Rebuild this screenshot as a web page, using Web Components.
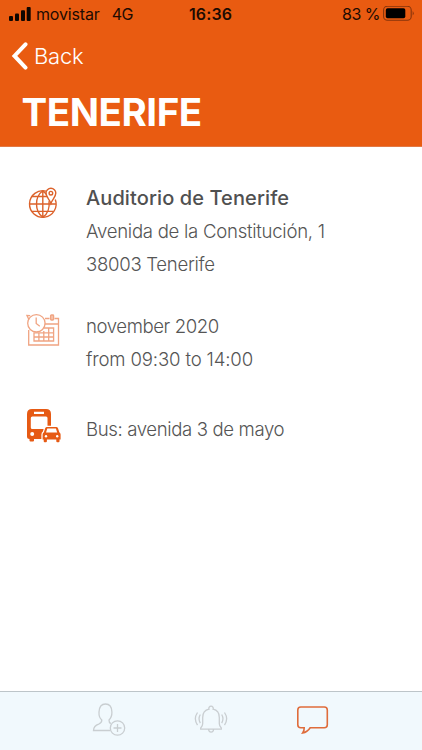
<!DOCTYPE html>
<html lang="en"><head><meta charset="utf-8"><title>Tenerife</title>
<style>html,body{margin:0;height:100%;overflow:hidden}body{font-family:Inter,"Liberation Sans",sans-serif}</style></head>
<body><event-screen></event-screen>
<script>
function define(name, html) {
  const t = document.createElement('template');
  t.innerHTML = html;
  customElements.define(name, class extends HTMLElement {
    constructor() {
      super();
      this.attachShadow({mode: 'open'}).append(t.content.cloneNode(true));
    }
  });
}
define('status-bar', `<style>
:host{display:grid;grid-template-columns:1fr auto 1fr;align-items:center;height:28px;padding:0 8px 0 9px;font-size:16px;line-height:28px;color:#1d0b02;white-space:nowrap}
.left,.right{display:flex;align-items:center}
.right{justify-content:flex-end}
.carrier{margin-left:5px;letter-spacing:-.15px}.net{margin-left:12px;letter-spacing:-.5px}
.time{font-weight:600;letter-spacing:.1px;margin-right:2px}.pct{letter-spacing:-.5px;margin-right:3px}
svg{display:block}
.left svg{margin-top:-1px}
</style>
<div class="left"><svg width="22" height="14" viewBox="0 0 22 14" fill="#100600"><rect y="9" width="4" height="5" rx="1"/><rect x="6" y="6.5" width="4" height="7.5" rx="1"/><rect x="12" y="3.2" width="4" height="10.8" rx="1"/><rect x="17.7" y="0" width="4" height="14" rx="1"/></svg><span class="carrier">movistar</span><span class="net">4G</span></div>
<span class="time">16:36</span>
<div class="right"><span class="pct">83 %</span><svg width="31" height="16" viewBox="0 0 31 16"><rect x=".6" y=".2" width="27.6" height="14" rx="3.8" fill="none" stroke="#87340b" stroke-width="1.1"/><rect x="2.8" y="2.2" width="19.5" height="10" rx="1.8" fill="#000"/><path d="M29.7 5q2 2.3 0 4.6z" fill="#87340b"/></svg></div>`);
define('nav-header', `<style>
:host{display:block;box-sizing:border-box;height:147px;background:#e95b11;color:#fff;border-bottom:1px solid #e27945}
.back{display:flex;align-items:center;height:56px;padding-left:11px;font-size:22px;font-weight:300;gap:5px}
.back span{letter-spacing:-.2px}
svg{display:block}
h1{margin:0;padding:7px 0 0 21.5px;font-size:38.5px;line-height:42px;font-weight:700;letter-spacing:-.45px}
</style><slot></slot>
<div class="back"><svg width="18" height="28" viewBox="0 0 18 28" fill="none" stroke="#fff" stroke-width="4" stroke-linecap="round" stroke-linejoin="miter"><path d="M14.5 2.3L3.5 14l11 11.6"/></svg><span>Back</span></div>
<h1>TENERIFE</h1>`);
define('info-row', `<style>
:host{display:grid;grid-template-columns:60px 1fr;align-items:start;font-size:18.6px;line-height:33px;font-weight:300;color:#555}
</style><slot name="icon"></slot><div><slot></slot></div>`);
define('text-line', `<style>:host{display:block;white-space:nowrap}:host([strong]){font-size:20px;font-weight:500;color:#505050}</style><slot></slot>`);
define('globe-icon', `<style>:host{display:block;padding:3px 0 0 2px}svg{display:block}</style>
<svg width="34" height="36" viewBox="0 0 34 36" fill="none" stroke="#dc622b" stroke-width="1.4"><path d="M18 6.1A13.3 13.3 0 1 0 27.300 14.4"/><path d="M14.8 5.8v26.5M1.5 19H28M4 11.5h15M4 26.4h21.6M14.8 5.8C6.4 12 6.4 26 14.8 32.3M14.8 5.8c1.500 1 2.600 2.200 3.400 3.700M21 16.200c.8 6.300-1.300 12.900-6.200 16.100"/><path d="M22.900 18.600c-1.500-4.400-4.900-6.400-4.900-10.500a4.900 4.900 0 0 1 9.800 0c0 4.100-3.400 6.100-4.900 10.500z"/><circle cx="22.900" cy="8.200" r="1.8"/></svg>`);
define('calendar-icon', `<style>:host{display:block;padding:3px 0 0}svg{display:block}</style>
<svg width="36" height="36" viewBox="0 0 36 36" fill="none" stroke="#f0a482" stroke-width="1.3"><circle cx="10.4" cy="10.3" r="8.7"/><path d="M10.2 4.5v6l3.6 2.7M4.2 2.6L1 2.5l2 4.2M19 5.5h4.5M28.5 5.5h4V32H2.7V17M18.7 11h13.800"/><rect x="24.6" y="2" width="3" height="5" rx=".8" fill="#f7c4ac"/><path d="M18 15h9.6v13H8v-8.2h19.6M8 24h19.6M12.9 19.8V28M17.8 18v10M22.7 15v13"/></svg>`);
define('bus-icon', `<style>:host{display:block;margin:-5px 0 0 -.5px}svg{display:block}</style>
<svg width="36" height="36" viewBox="0 0 36 36"><path fill="#e65a14" fill-rule="evenodd" d="M6 1h14q5 0 5 5v16H1V6q0-5 5-5zM8 3.700v2.200h10V3.700zM6.300 8.500q-1.500 0-1.500 1.500v9.500q0 1.500 1.500 1.500h13.700q1.500 0 1.500-1.500V10q0-1.500-1.500-1.500z"/><path fill="#e65a14" d="M1 21h17v10H8v1.500q0 1-1 1H4.500q-1 0-1-1V31q-2.500 0-2.500-2.500z"/><circle cx="6.200" cy="26" r="2" fill="#fff"/><path fill="#e65a14" stroke="#fff" stroke-width="2.400" paint-order="stroke" d="M21 18.900h9.200q1.300 0 1.800 1.300l1.300 4q1.300.7 1.300 2.300v5h-1.100v1.700q0 1-1 1h-1.200q-1 0-1-1v-1.700h-9.400v1.700q0 1-1 1h-1.200q-1 0-1-1v-1.700h-1.100v-5q0-1.600 1.300-2.300l1.300-4q.5-1.300 1.800-1.300z"/><path fill="#fff" d="M21.300 20.600h8.600l1.300 4H20z"/><circle cx="20" cy="28.200" r="1.200" fill="#fff"/><circle cx="31.200" cy="28.200" r="1.200" fill="#fff"/></svg>`);
define('tab-bar', `<style>
:host{display:grid;grid-template-columns:repeat(3,102px);justify-content:center;justify-items:center;align-items:center;box-sizing:border-box;height:59px;border-top:1px solid #bdc5c9;background:#f1f9fd}
svg{display:block}
svg:not(:last-child){margin-bottom:2px}
</style>
<svg width="36" height="36" viewBox="0 0 36 36" fill="none" stroke="#c9ced1" stroke-width="1.3"><path d="M19 28.5H2.5c.2-4 2-5.4 5.2-6.4 2.3-.8 3.2-1.4 3.1-4-2.2-2-3-4.7-2.8-8C8.2 5 10.7 2 14.5 2s6.3 3 6.4 8c.1 3.3-.8 6-2.9 8-.1 2 .4 2.9 1.8 3.6"/><circle cx="26.5" cy="26" r="7.2"/><path d="M26.5 22v8M22.5 26h8"/></svg>
<svg width="36" height="30" viewBox="0 0 36 30" fill="none" stroke="#c9ced1" stroke-width="1.3"><path d="M16 4.2a2.2 2.2 0 1 1 4.1 0c4.2.8 6.2 4 6.2 8.3v6.3c0 1.7.4 2.3 2 4.2v1.2H7.700V23c1.600-1.900 2-2.500 2-4.200v-6.300c0-4.300 2.100-7.500 6.300-8.300zM15.600 24.200c.2 3.800 4.800 3.800 5 0M4.500 7.500q-4.300 6.300 0 12.600M31.500 7.500q4.300 6.300 0 12.600M7.300 9.500q-2.500 4.300 0 8.600M28.700 9.500q2.500 4.300 0 8.600"/></svg>
<svg width="34" height="30" viewBox="0 0 34 30" fill="none" stroke="#df6c3b" stroke-width="1.6"><path d="M4.800 1h23.500q3 0 3 3v14.700q0 3-3 3H14.200c-1.800 2.700-4 4.700-7.500 5.200 1.200-1.700 1.600-3 1.500-5.200H4.800q-3 0-3-3V4q0-3 3-3z"/></svg>`);
define('event-screen', `<style>
:host{display:flex;flex-direction:column;height:100vh;background:#fff}
main{flex:1;display:flex;flex-direction:column;padding:35px 26px 0}
.when{margin-top:29px}.bus{margin-top:37px}
.name{letter-spacing:.1px}.a{letter-spacing:-.28px}.b{letter-spacing:-.3px}.c{letter-spacing:-.42px}.d{letter-spacing:-.16px}.e{letter-spacing:-.38px}
</style>
<nav-header><status-bar></status-bar></nav-header>
<main>
<info-row><globe-icon slot="icon"></globe-icon><text-line strong class="name">Auditorio de Tenerife</text-line><text-line class="a">Avenida de la Constitución, 1</text-line><text-line class="b">38003 Tenerife</text-line></info-row>
<info-row class="when"><calendar-icon slot="icon"></calendar-icon><text-line class="c">november 2020</text-line><text-line class="d">from 09:30 to 14:00</text-line></info-row>
<info-row class="bus"><bus-icon slot="icon"></bus-icon><text-line class="e">Bus: avenida 3 de mayo</text-line></info-row>
</main>
<tab-bar></tab-bar>`);
</script></body></html>
